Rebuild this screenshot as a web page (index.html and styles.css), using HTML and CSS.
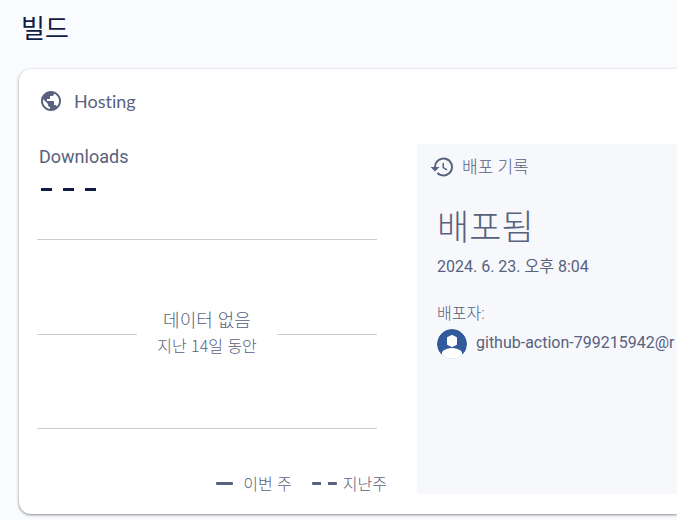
FILE: index.html
```
<!DOCTYPE html>
<html lang="ko">
<head>
    <meta charset="UTF-8">
    <meta name="viewport" content="width=device-width, initial-scale=1.0">
    <title>빌드</title>
    <link rel="stylesheet" href="styles.css">
</head>
<body>

    <h1>빌드</h1>

    <section class="card">
        <h2 class="card-title">
            <svg class="icon" viewBox="0 0 24 24" aria-hidden="true">
                <path d="M12 2C6.48 2 2 6.48 2 12s4.48 10 10 10 10-4.48 10-10S17.52 2 12 2zm-1 17.93c-3.95-.49-7-3.85-7-7.93 0-.62.08-1.21.21-1.79L9 15v1c0 1.1.9 2 2 2v1.93zm6.9-2.54c-.26-.81-1-1.39-1.9-1.39h-1v-3c0-.55-.45-1-1-1H8v-2h2c.55 0 1-.45 1-1V7h2c1.1 0 2-.9 2-2v-.41c2.93 1.19 5 4.06 5 7.41 0 2.08-.8 3.97-2.1 5.39z"/>
            </svg>
            <span>Hosting</span>
        </h2>

        <div class="content">
            <!-- Downloads chart -->
            <div class="usage">
                <h3 class="usage-title">Downloads</h3>
                <div class="usage-value"><i></i><i></i><i></i></div>

                <div class="chart">
                    <div class="no-data">
                        <div class="no-data-title">데이터 없음</div>
                        <div class="no-data-text">지난 14일 동안</div>
                    </div>
                </div>

                <div class="legend">
                    <span class="legend-item"><i class="line"></i>이번 주</span>
                    <span class="legend-item previous"><i class="line dashed"></i>지난주</span>
                </div>
            </div>

            <!-- Release history -->
            <div class="history">
                <h3 class="history-title">
                    <svg class="icon" viewBox="0 0 24 24" aria-hidden="true">
                        <path d="M13.500 2.500a9.500 9.500 0 0 0-9.500 9.500H.5l4.500 4.500L9.500 12H6a7.500 7.500 0 1 1 2.200 5.300l-1.420 1.420A9.500 9.500 0 1 0 13.500 2.500zM12.500 8v5l4.200 2.500.7-1.200-3.400-2V8z"/>
                    </svg>
                    <span>배포 기록</span>
                </h3>
                <div class="release">
                    <div class="status">배포됨</div>
                    <div class="date">2024. 6. 23. 오후 8:04</div>
                    <div class="deployer-label">배포자:</div>
                    <div class="deployer">
                        <svg class="avatar" viewBox="0 0 30 30" aria-hidden="true">
                            <circle cx="15" cy="15" r="15" fill="#335a9a"/>
                            <path d="M15 7l4 2v6l-4 2-4-2V9z" fill="#fff" stroke="#fff" stroke-width="2" stroke-linejoin="round"/>
                            <path d="M5 30v-7c3-3 6-4 10-4s7 1 10 4v7z" fill="#fff"/>
                        </svg>
                        <span>github-action-799215942@r</span>
                    </div>
                </div>
            </div>
        </div>
    </section>

</body>
</html>
```
FILE: styles.css
```
* {
    box-sizing: border-box;
}
body {
    margin: 0;
    padding: 9px 0 0 19px;
    background: #fafbff;
    color: #58617d;
    font-family: Roboto, 'Noto Sans CJK KR', sans-serif;
    font-size: 16px;
    overflow-x: hidden;
}
h1, h2, h3 {
    margin: 0;
    font-weight: 400;
}
h1 {
    padding-left: 2px;
    color: #101c45;
    font-size: 26px;
    line-height: 40px;
}
.card {
    margin-top: 20px;
    margin-bottom: 6px;
    padding: 20px 0 20px 18px;
    background: white;
    border-radius: 12px 0 0 12px;
    box-shadow: 0 1px 3px rgba(0, 0, 0, 0.45);
}
.icon {
    width: 24px;
    height: 24px;
    fill: currentColor;
}
.card-title {
    display: flex;
    align-items: center;
    gap: 11px;
    padding-left: 2px;
    height: 24px;
    font-family: Lato, sans-serif;
    font-size: 18px;
    font-variant-ligatures: none;
}
.content {
    display: grid;
    grid-template-columns: 350px minmax(0, 1fr);
    gap: 30px;
    margin-top: 31px;
}
.usage-title {
    padding-left: 2px;
    font-size: 18px;
    line-height: 26px;
}
.usage-value {
    display: flex;
    gap: 11px;
    padding: 18px 0 0 4px;
}
.usage-value i {
    width: 11px;
    height: 3px;
    background: #101c45;
}
.chart {
    display: flex;
    align-items: center;
    height: 190px;
    margin: 48px 10px 0 0;
    border-top: 1px solid #cbcdd1;
    border-bottom: 1px solid #cbcdd1;
}
.chart::before,
.chart::after {
    content: "";
    flex: 1;
    height: 1px;
    background: #cbcdd1;
}
.no-data {
    padding: 0 20px 4px;
    text-align: center;
    font-family: 'Noto Sans CJK KR', sans-serif;
    font-weight: 300;
}
.no-data-title {
    font-size: 18px;
    line-height: 26px;
}
.no-data-text {
    font-size: 16px;
    line-height: 26px;
}
.legend {
    display: flex;
    justify-content: flex-end;
    gap: 20px;
    margin-top: 43px;
    font-family: 'Noto Sans CJK KR', sans-serif;
    font-weight: 300;
    line-height: 22px;
}
.legend-item {
    display: flex;
    align-items: center;
    gap: 10px;
}
.legend-item.previous {
    gap: 6px;
}
.line {
    width: 17px;
    height: 3px;
    border-radius: 1px;
    background: #58617d;
}
.line.dashed {
    width: 25px;
    background: linear-gradient(to right, #58617d 9px, transparent 9px, transparent 16px, #58617d 16px);
}
.history {
    min-height: 350px;
    padding: 10px 0 20px 13px;
    background: #f6f8fc;
    border-radius: 2px 0 0 2px;
    overflow: hidden;
}
.history-title {
    display: flex;
    align-items: center;
    gap: 8px;
    font-size: 17px;
    font-weight: 300;
    line-height: 26px;
}
.release {
    padding-left: 7px;
    white-space: nowrap;
}
.status {
    margin-top: 24px;
    font-size: 35px;
    font-weight: 300;
    line-height: 50px;
}
.date {
    margin-top: 1px;
    line-height: 24px;
}
.deployer-label {
    margin-top: 23px;
    font-weight: 300;
    line-height: 24px;
}
.deployer {
    display: flex;
    align-items: center;
    gap: 9px;
    margin-top: 3px;
}
.deployer span {
    padding-bottom: 3px;
}
.avatar {
    flex: none;
    width: 30px;
    height: 30px;
    border-radius: 50%;
}
```
